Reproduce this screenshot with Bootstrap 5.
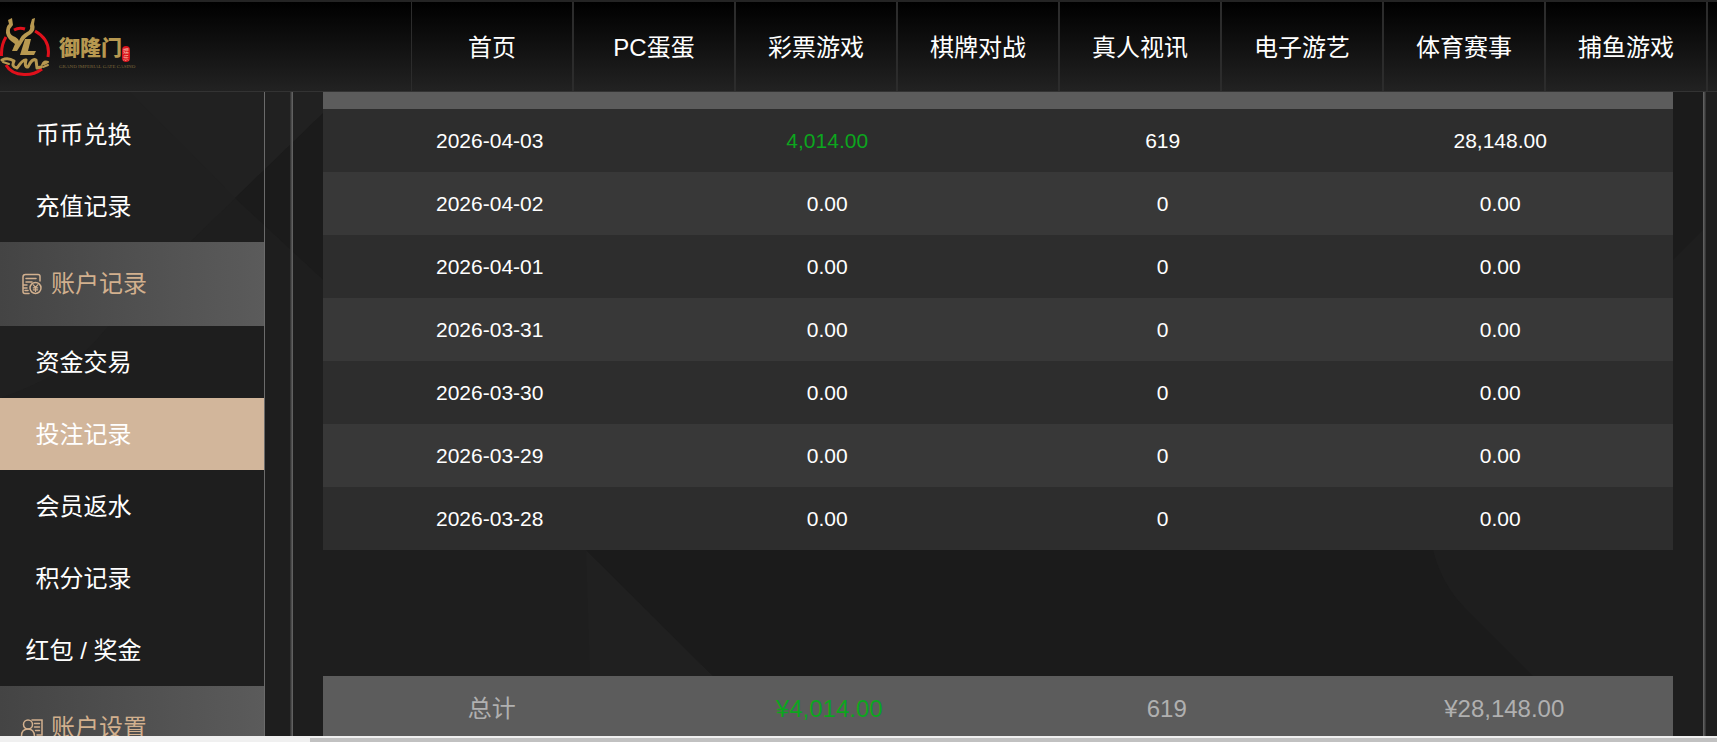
<!DOCTYPE html>
<html lang="zh-CN">
<head>
<meta charset="utf-8">
<meta name="viewport" content="width=device-width, initial-scale=1">
<title>投注记录</title>
<link rel="stylesheet" href="https://cdn.jsdelivr.net/npm/bootstrap@5.3.0/dist/css/bootstrap.min.css">
<style>
body{font-family:"Liberation Sans","Noto Sans CJK SC",sans-serif;font-size:24px;line-height:36px;background:#1e1e1e;color:#fff}
a{color:inherit;text-decoration:none}
.site-head{height:92px;background:linear-gradient(#000,#222);border-top:2px solid #242424;border-bottom:1px solid #333}
.logo-cell{width:411px}
.logo-words{padding-top:5px}
.logo-text{font:900 21px/36px "Noto Sans CJK SC",sans-serif;color:#b79850}
.logo-sub{font:5px/6px "Liberation Serif",serif;color:#7d683c;white-space:nowrap}
.logo-seal{width:8px;height:16px;border-radius:4px;background:#d9121c;color:#f5b9a0;font:6px/7px "Noto Sans CJK SC",sans-serif}
.nav-cell{width:162px;border:solid #2c2c2c;border-width:0 1px;padding-top:3px}
.side{width:265px;border-right:1px solid #6b6b6b;padding-top:6px}
.side-item{height:72px;padding-top:2px}
.side-item span{width:167px}
.side-item.current{background:#d2b69b}
.side-group{height:84px;padding-left:20px;gap:7px;color:#d2b08e;background:linear-gradient(90deg,#444,#5b5b5b)}
.side-group svg{width:24px;height:24px}
.panel{margin:0 11px 0 25px;padding:0 30px;border:solid #5e5e5e;border-width:0 3px;border-image:linear-gradient(90deg,#2c2c2c,#6b6b6b 3px,#6b6b6b calc(100% - 3px),#2c2c2c) 1 3}
.records{font-size:21px;line-height:31px}
.records th,.records td{height:63px;padding:0;font-weight:400}
.records thead th{height:17px;background:#5c5c5c}
.records tbody tr:nth-child(odd){background:#2d2d2d}
.records tbody tr:nth-child(even){background:#383838}
.c1{width:24.7%}.c2{width:25.3%}.c3{width:24.4%}.c4{width:25.6%}
.win{color:#0ca61e}
.totals{margin-top:126px;height:64px;padding-top:1px;background:#5c5c5c;color:#b0b0b0}
.hscroll{height:6px;background:#f0f0f0;padding:2px 0 0 310px}
.hscroll div{background:#c1c1c1}
.facets{z-index:-1}
</style>
</head>
<body class="vh-100 overflow-hidden d-flex flex-column">
<header class="site-head d-flex flex-shrink-0 overflow-hidden">
  <a href="#" class="logo-cell d-flex align-items-center flex-shrink-0" aria-label="御隆门">
    <svg width="51" height="62" viewBox="0 16 51 62" fill="none" stroke-linecap="round" stroke-linejoin="round">
      <g stroke="#e0101b" stroke-width="3" stroke-linecap="butt">
        <path d="M14 30Q19 27 25 29M35 31Q51 40 48 57M6 37Q1 45 1.500 56M6 65Q11 74 24 74.500Q34 75 42 69"/>
      </g>
      <g fill="#b79850">
        <path d="M12 18L13 25L10 29Q9 34 13 36Q18 38 19 41Q21 35 27 32Q31 30 30 26L32 19L35 18L34 24Q36 30 31 34Q25 37 22 43L17 51H12L15 44Q7 39 6 33Q6 26 9 24L8 20Z"/>
        <path d="M25 39H31L28 51H36L34 55H20Z"/>
      </g>
      <g stroke="#b79850">
        <path stroke-width="3" d="M2 60Q8 57 14 61Q11 67 17 68Q23 59 26 60Q24 67 28 67Q32 58 36 60L37 68L41 67"/>
        <path stroke-width="2" d="M3 62L9 64M42 65Q44 60 48 62L44 64M43 67L48 65"/>
      </g>
    </svg>
    <span class="logo-words d-flex flex-column ms-2">
      <span class="d-flex align-items-center"><span class="logo-text">御隆门</span><span class="logo-seal d-flex flex-column align-items-center justify-content-center mt-3"><span>娱</span><span>乐</span></span></span>
      <span class="logo-sub">GRAND IMPERIAL GATE CASINO</span>
    </span>
  </a>
  <nav class="d-flex flex-grow-1" id="topnav"></nav>
</header>
<main class="d-flex flex-grow-1 overflow-hidden position-relative">
  <svg class="facets position-absolute top-0 start-0 w-100 h-100" viewBox="0 92 1717 644" preserveAspectRatio="none" aria-hidden="true">
    <path fill="#202020" d="M0 92H345L190 242L105 330Q70 375 0 398Z"/>
    <path fill="#212121" d="M130 92H345L235 198Z"/>
    <path fill="#1b1b1b" d="M345 92L235 198L345 300Z"/>
    <path fill="#202020" d="M586 550L713 676H590Z"/>
    <path fill="#1b1b1b" d="M586 550H1433Q1442 585 1465 608L1533 676H713Z"/>
    <path fill="#1b1b1b" d="M1673 92H1703V230L1673 260Z"/>
  </svg>
  <aside class="side flex-shrink-0" id="side">
    <a href="#" class="side-item d-flex align-items-center"><span class="text-center">币币兑换</span></a>
    <a href="#" class="side-item d-flex align-items-center"><span class="text-center">充值记录</span></a>
    <div class="side-group d-flex align-items-center">
      <svg viewBox="0 0 24 24" fill="none" stroke="currentColor" stroke-width="1.500" stroke-linecap="round"><path d="M20 9V4.500Q20 2.500 18 2.500H5.500Q3 2.500 3 5V19.500Q3 21.500 5 21.500H9M6 6.500H16M6 10H12M3 13H7M3 16H7M5 18.500H8"/><circle cx="15.500" cy="16" r="5.500"/><path stroke-width="1.200" d="M13.300 12.800L15.500 15.500L17.700 12.800M15.500 15.500V19.500M13.300 15.800H17.700M13.300 17.800H17.700"/></svg>
      <span>账户记录</span>
    </div>
    <a href="#" class="side-item d-flex align-items-center"><span class="text-center">资金交易</span></a>
    <a href="#" class="side-item current d-flex align-items-center" aria-current="page"><span class="text-center">投注记录</span></a>
    <a href="#" class="side-item d-flex align-items-center"><span class="text-center">会员返水</span></a>
    <a href="#" class="side-item d-flex align-items-center"><span class="text-center">积分记录</span></a>
    <a href="#" class="side-item d-flex align-items-center"><span class="text-center">红包 / 奖金</span></a>
    <div class="side-group d-flex align-items-center">
      <svg viewBox="0 0 24 24" fill="none" stroke="currentColor" stroke-width="1.500" stroke-linecap="round"><circle cx="8" cy="8.500" r="4.500"/><path d="M1.500 20Q1.500 13 8 13Q14 13 14.500 20M12 4H22V19H17M14.500 7.500H19.500M14.500 11H19.500M15.500 14.500H19.500"/></svg>
      <span>账户设置</span>
    </div>
  </aside>
  <section class="panel flex-grow-1">
    <table class="records w-100 text-center">
      <colgroup><col class="c1"><col class="c2"><col class="c3"><col class="c4"></colgroup>
      <thead><tr><th></th><th></th><th></th><th></th></tr></thead>
      <tbody>
        <tr><td>2026-04-03</td><td class="win">4,014.00</td><td>619</td><td>28,148.00</td></tr>
        <tr><td>2026-04-02</td><td>0.00</td><td>0</td><td>0.00</td></tr>
        <tr><td>2026-04-01</td><td>0.00</td><td>0</td><td>0.00</td></tr>
        <tr><td>2026-03-31</td><td>0.00</td><td>0</td><td>0.00</td></tr>
        <tr><td>2026-03-30</td><td>0.00</td><td>0</td><td>0.00</td></tr>
        <tr><td>2026-03-29</td><td>0.00</td><td>0</td><td>0.00</td></tr>
        <tr><td>2026-03-28</td><td>0.00</td><td>0</td><td>0.00</td></tr>
      </tbody>
    </table>
    <div class="totals row g-0 align-items-center text-center">
      <div class="col">总计</div><div class="col win">¥4,014.00</div><div class="col">619</div><div class="col">¥28,148.00</div>
    </div>
  </section>
</main>
<div class="hscroll d-flex flex-shrink-0"><div class="flex-grow-1"></div></div>
<script src="https://cdn.jsdelivr.net/npm/bootstrap@5.3.0/dist/js/bootstrap.bundle.min.js"></script>
<script>
['首页','PC蛋蛋','彩票游戏','棋牌对战','真人视讯','电子游艺','体育赛事','捕鱼游戏',''].forEach(function(t){
  var a=document.createElement('a');
  a.href='#';
  a.className='nav-cell d-flex align-items-center justify-content-center flex-shrink-0';
  a.textContent=t;
  document.getElementById('topnav').appendChild(a);
});
</script>
</body>
</html>
